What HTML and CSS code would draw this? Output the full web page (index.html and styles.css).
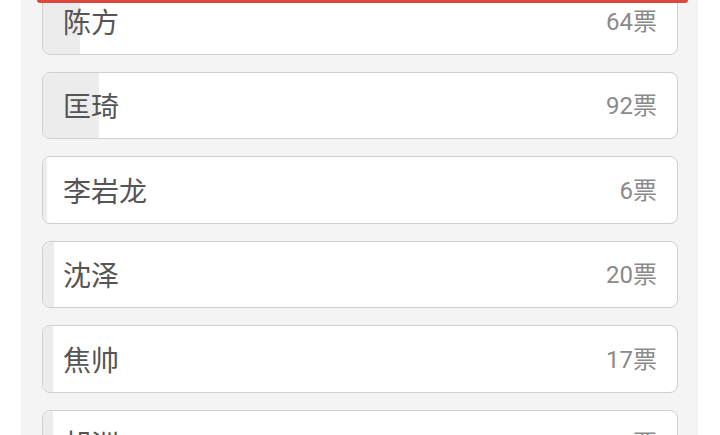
FILE: index.html
```html
<!DOCTYPE html>
<html lang="zh">
<head>
<meta charset="utf-8">
<link rel="stylesheet" href="styles.css">
</head>
<body>
<div class="panel">
  <div class="topbar"></div>
  <ul class="list">
    <li class="card"><span class="fill" style="width:37px"></span><span class="name">陈方</span><span class="votes">64票</span></li>
    <li class="card"><span class="fill" style="width:56px"></span><span class="name">匡琦</span><span class="votes">92票</span></li>
    <li class="card"><span class="fill" style="width:4px"></span><span class="name">李岩龙</span><span class="votes">6票</span></li>
    <li class="card"><span class="fill" style="width:11px"></span><span class="name">沈泽</span><span class="votes">20票</span></li>
    <li class="card"><span class="fill" style="width:10px"></span><span class="name">焦帅</span><span class="votes">17票</span></li>
    <li class="card"><span class="fill" style="width:10px"></span><span class="name">胡洲</span><span class="votes">16票</span></li>
  </ul>
</div>
</body>
</html>
```

FILE: styles.css
```css
html, body {
  margin: 0;
  padding: 0;
  background: #ffffff;
  height: 100%;
  overflow: hidden;
}
body {
  font-family: "Noto Sans CJK SC", "Noto Sans", sans-serif;
}
.panel {
  position: relative;
  margin-left: 21px;
  width: 677px;
  height: 100%;
  background: #f4f4f4;
  overflow: hidden;
}
.topbar {
  position: absolute;
  left: 16px;
  top: 0;
  width: 651px;
  height: 3px;
  background: #e0473c;
  border-radius: 0 0 4px 4px;
  z-index: 2;
}
.list {
  list-style: none;
  margin: -13px 0 0 0;
  padding: 0 20px 0 21px;
  display: flex;
  flex-direction: column;
  gap: 17px;
}
.card {
  position: relative;
  box-sizing: border-box;
  height: 67.5px;
  background: #ffffff;
  border: 1px solid #cfcfcf;
  border-radius: 8px;
  overflow: hidden;
  display: flex;
  align-items: center;
  justify-content: space-between;
  padding: 0 20px 0 20px;
}
.fill {
  position: absolute;
  left: 0;
  top: 0;
  bottom: 0;
  background: #ececec;
}
.name {
  position: relative;
  font-size: 28px;
  color: #555555;
  line-height: 1;
}
.votes {
  position: relative;
  font-family: Roboto, "Noto Sans CJK SC", sans-serif;
  font-size: 24px;
  color: #8a8a8a;
  line-height: 1;
  margin-top: 2px;
}
```
